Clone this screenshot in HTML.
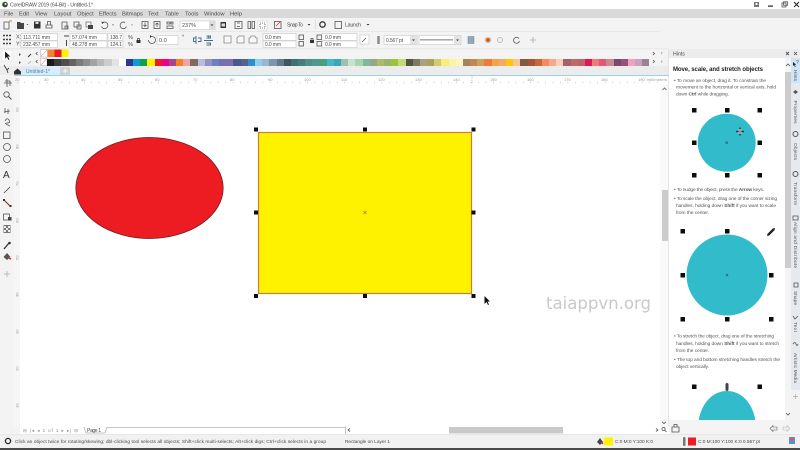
<!DOCTYPE html>
<html lang="en"><head><meta charset="utf-8"><title>CorelDRAW 2019</title>
<style>
html,body{margin:0;padding:0;width:800px;height:450px;overflow:hidden;background:#fff}
svg{position:absolute;left:0;top:0;font-family:"Liberation Sans",sans-serif;font-size:5.6px}
.pal{position:absolute;display:flex;height:7px}
.pal i{display:block;flex:1 1 0;height:100%}
text{fill:#4a4a4a}
.ic{fill:none;stroke:#555;stroke-width:.8}
.d{fill:#333}
.f{fill:#fff;stroke:#bbb;stroke-width:.5}
.r{fill:#999;font-size:4px}
.h{fill:#555;font-size:4.8px}
</style></head><body>
<svg width="800" height="450" viewBox="0 0 800 450" xmlns="http://www.w3.org/2000/svg">
<defs><filter id="b" x="-5%" y="-5%" width="110%" height="110%"><feGaussianBlur stdDeviation=".3"/></filter></defs>
<rect width="800" height="450" fill="#f3f3f3"/>
<!-- title -->
<rect width="800" height="9" fill="#fff"/>
<rect y="9" width="800" height="9" fill="#d9d9d9"/>
<rect y="31" width="660" height=".6" fill="#e2e2e2"/>
<rect y="48.5" width="668" height=".6" fill="#e2e2e2"/>
<rect y="66" width="668" height="9" fill="#ececec"/>
<!-- canvas -->
<rect x="20" y="84" width="640" height="343" fill="#fff"/>
<rect x="14" y="76" width="655" height="8" fill="#fff"/>
<rect x="14" y="76" width="6" height="351" fill="#f6f6f6"/>
<rect x="14" y="75" width="655" height=".9" fill="#8fd0e4"/>
<rect x="660" y="84" width="9" height="343" fill="#fafafa"/>
<rect x="662" y="190" width="6" height="51" fill="#ccc"/>
<!-- docker -->
<rect x="668.500" y="49" width="131.500" height="9" fill="#ececec"/>
<rect x="669" y="58" width="116" height="362" fill="#fff"/>
<rect x="785" y="58" width="6" height="362" fill="#f4f4f4"/>
<rect x="785" y="72" width="6" height="196" fill="#ccc"/>
<rect x="791" y="58" width="9" height="332" fill="#e6e9ee"/>
<rect x="791" y="58" width="9" height="25" fill="#cfe4f8"/>
<rect x="669" y="420" width="122" height="14" fill="#f4f4f4"/>
<rect x="791" y="390" width="9" height="44" fill="#f3f3f3"/>
<rect x="668" y="49" width=".7" height="385" fill="#ddd"/>
<!-- status -->
<rect x="20" y="427" width="649" height="7" fill="#fff"/>
<rect x="106" y="427" width="240" height=".7" fill="#aaa"/>
<rect x="345" y="427" width=".7" height="7" fill="#aaa"/>
<rect x="449" y="427" width="114" height="6.500" fill="#c9c9c9"/>
<rect y="434" width="800" height="14" fill="#f1f1f1"/>
<rect y="434" width="800" height=".5" fill="#ddd"/>
<rect y="448" width="800" height="2" fill="#4a4a4a"/>

<g filter="url(#b)">
<!-- title bar -->
<circle cx="5" cy="4.500" r="2.800" fill="#2c4a2c"/><circle cx="5.500" cy="4" r="1.100" fill="#dfe8c0"/>
<text x="10" y="6.500" textLength="83" font-size="5.200">CorelDRAW 2019 (64-Bit) - Untitled-1*</text>
<rect x="754" y="2" width="5" height="5" fill="#777"/><rect x="755.500" y="3" width="2" height="2" fill="#fff"/>
<rect x="768" y="5.500" width="5" height="1.200" fill="#222"/>
<rect class="ic" x="782" y="3" width="4" height="4"/><rect class="ic" x="783.500" y="1.800" width="4" height="3.500"/>
<path d="M794 2l5 5M799 2l-5 5" stroke="#222" stroke-width="1" fill="none"/>
<!-- menu -->
<g font-size="5.800">
<text x="4" y="15.500">File</text><text x="19" y="15.500">Edit</text><text x="35" y="15.500">View</text><text x="54" y="15.500">Layout</text><text x="77" y="15.500">Object</text><text x="99" y="15.500">Effects</text><text x="122" y="15.500">Bitmaps</text><text x="148" y="15.500">Text</text><text x="165" y="15.500">Table</text><text x="185" y="15.500">Tools</text><text x="204" y="15.500">Window</text><text x="230" y="15.500">Help</text>
</g>
<!-- toolbar row 1 -->
<path class="ic" d="M4 22v7h5v-7z"/><path d="M9 21h3" stroke="#d97a20"/>
<path d="M17 22h3l1 1h3v6h-7z" fill="#444"/><path d="M26.500 24l1 1 1-1z" class="d"/>
<path d="M34 21.500h6.500v7h-6.500z" fill="#333"/><rect x="35.500" y="22" width="3" height="2" fill="#ddd"/>
<path class="ic" d="M46 25v3h6v-3zM47.500 25v-3.500h3v3.500"/>
<path class="ic" stroke="#888" d="M62 22h5v7h-5zM65 26h3v3h-3z"/>
<path class="ic" d="M74 22h5v5h-5zM77 25h4v4h-4z"/>
<rect x="86" y="22" width="5" height="5" fill="none" stroke="#666" stroke-width=".7"/><rect x="88" y="25" width="5" height="4" fill="#444"/>
<path class="ic" d="M103 22.500a3.300 3.300 0 1 1-1.500 4"/><path d="M101.500 21.500l2.500 1-2 1.500z" class="d"/><path d="M112 24.500l1 1 1-1z" class="d"/>
<path class="ic" stroke="#aaa" d="M125 22.500a3.300 3.300 0 1 0 1.500 4"/><path d="M131 24.500l1 1 1-1z" fill="#666"/>
<rect class="ic" x="142" y="21.500" width="6" height="7"/><path d="M145 22.500v4M143.500 25l1.500 1.500 1.500-1.500" stroke="#444" stroke-width=".7" fill="none"/>
<rect class="ic" x="154" y="21.500" width="6" height="7"/><path d="M157 27v-4M155.500 24.500l1.500-1.500 1.500 1.500" stroke="#444" stroke-width=".7" fill="none"/>
<path class="ic" d="M167 22h3v2h-3zM171 22h2v2h-2zM167 26h6v2.500h-6z"/>
<rect class="f" x="180" y="21" width="35" height="8.500"/>
<text x="182" y="27" font-size="5.500">237%</text>
<rect x="209" y="21.500" width="6" height="7.500" fill="#ddd"/><path d="M210.500 24.500l1.500 1.500 1.500-1.500z" class="d"/>
<rect x="220.500" y="22" width="5.500" height="6" fill="#333"/><rect x="221.500" y="23.500" width="3.500" height="3" fill="#ddd"/>
<path class="ic" d="M235 21.500h7v7h-7zM237 23h3M237 26.500h3"/>
<path class="ic" d="M248 21.500h2.500v7h-2.500zM252 21.500h2.500v7h-2.500z"/>
<rect x="258" y="21" width="9" height="9" fill="#fff" stroke="#ccc" stroke-width=".5"/><path class="ic" d="M260 23h5v5h-5z" stroke-dasharray="1 1"/>
<rect class="ic" x="274.500" y="21.500" width="6.500" height="7"/><path d="M276 26l4-4" stroke="#d33" stroke-width=".8"/>
<text x="287" y="26.500" textLength="16" font-size="5.200">Snap To</text><path d="M307.500 24l1.500 1.500 1.500-1.500z" class="d"/>
<rect x="315" y="20" width=".6" height="9" fill="#ccc"/>
<circle cx="322.500" cy="24.500" r="2.700" fill="none" stroke="#333" stroke-width="1.300"/>
<rect class="ic" x="335" y="21.500" width="6.500" height="7"/>
<text x="345" y="26.500" textLength="16" font-size="5.200">Launch</text><path d="M366.500 24l1.500 1.500 1.500-1.500z" class="d"/>
<!-- property row -->
<path d="M3 35.500h2M6 35.500h2M9 35.500h2M3 39.500h2M6 39.500h2M9 39.500h2M3 43.500h2M6 43.500h2M9 43.500h2" stroke="#444" stroke-width="1.500"/>
<text x="16" y="38.500" font-size="5.500">X:</text><text x="16" y="45.500" font-size="5.500">Y:</text>
<rect class="f" x="21" y="33.500" width="36.500" height="7"/><rect class="f" x="21" y="41" width="36.500" height="6.500"/>
<text x="23" y="39" textLength="27" font-size="5">113.711 mm</text><text x="23" y="46" textLength="27" font-size="5">232.457 mm</text>
<path d="M64 36h5M66.500 40v6" stroke="#444" stroke-width="1"/>
<rect class="f" x="70" y="33.500" width="37" height="7"/><rect class="f" x="70" y="41" width="37" height="6.500"/>
<text x="72" y="39" textLength="25" font-size="5">57.074 mm</text><text x="72" y="46" textLength="25" font-size="5">48.278 mm</text>
<rect class="f" x="108" y="33.500" width="15" height="7"/><rect class="f" x="108" y="41" width="15" height="6.500"/>
<text x="110" y="39" textLength="12" font-size="5">138.7</text><text x="110" y="46" textLength="12" font-size="5">124.1</text>
<text x="128" y="39">%</text><text x="128" y="46">%</text>
<rect x="136.500" y="40" width="4" height="3" fill="#333"/><path class="ic" d="M137.500 40v-1.500h2V40"/>
<path class="ic" d="M148.500 40a3.500 3.500 0 1 0 3.500-3.500"/><path d="M150 35l2 1.500-2 1.500z" class="d"/>
<rect class="f" x="157" y="35.500" width="21" height="9"/><text x="159" y="42">0.0</text>
<text x="182" y="39" font-size="6">°</text>
<path d="M196 36v8M196 38h-2.500v3.500h2.500M198 38h3v3.500h-3" stroke="#3a6d8a" stroke-width=".9" fill="none"/>
<path d="M204 40.500h9M208.500 36v2.500M206.500 36h4v2h-4M206.500 43h4v2h-4" stroke="#3a6d8a" stroke-width=".9" fill="none"/>
<path d="M224 36h7v7h-7z" fill="#f8f8f8" stroke="#888" stroke-width=".8"/>
<path d="M237 43v-5l2-2h5v7z" fill="#f8f8f8" stroke="#888" stroke-width=".8"/>
<path d="M249 43v-5q2 0 2-2h4q0 2 2 2v5z" fill="#f8f8f8" stroke="#888" stroke-width=".8"/>
<rect class="f" x="263" y="33.500" width="33" height="7"/><rect class="f" x="263" y="41" width="33" height="6.500"/>
<text x="265" y="39" textLength="16" font-size="5">0.0 mm</text><text x="265" y="46" textLength="16" font-size="5">0.0 mm</text>
<rect class="ic" stroke="#888" x="299" y="35" width="4.500" height="4.500"/><rect class="ic" stroke="#888" x="299" y="41.500" width="4.500" height="4.500"/>
<rect x="310" y="40" width="4" height="3" fill="#333"/><path class="ic" d="M311 40v-1.500h2V40"/>
<rect class="ic" stroke="#888" x="317" y="35" width="4.500" height="4.500"/><rect class="ic" stroke="#888" x="317" y="41.500" width="4.500" height="4.500"/>
<rect class="f" x="322" y="33.500" width="35" height="7"/><rect class="f" x="322" y="41" width="35" height="6.500"/>
<text x="325" y="39" textLength="16" font-size="5">0.0 mm</text><text x="325" y="46" textLength="16" font-size="5">0.0 mm</text>
<rect class="f" x="360" y="35" width="9" height="9"/><path class="ic" d="M362 42l4-4"/>
<path d="M378.500 36v8" stroke="#888" stroke-width="2.500"/>
<rect class="f" x="384" y="35.500" width="33" height="9"/><text x="386" y="42" textLength="17" font-size="5">0.567 pt</text>
<rect x="410" y="36" width="7" height="8" fill="#e2e2e2"/><path d="M412 39.500l1.500 1.500 1.500-1.500z" class="d"/>
<rect class="f" x="419" y="35.500" width="42" height="9"/><rect x="420" y="39.500" width="33" height=".8" fill="#555"/>
<rect x="454" y="36" width="7" height="8" fill="#e2e2e2"/><path d="M456 39.500l1.500 1.500 1.500-1.500z" class="d"/>
<rect x="468" y="36.500" width="6" height="7" fill="#8fa9bd" stroke="#6b8597" stroke-width=".5"/>
<circle cx="488" cy="40" r="2.800" fill="#d8894d"/><circle cx="488" cy="40" r="1.100" fill="#b04a3a"/>
<circle cx="500" cy="40" r="2.500" fill="none" stroke="#bbb" stroke-width="1"/>
<path class="ic" stroke="#444" d="M519 38.500a3 3 0 1 0 .5 2.500"/>
<path d="M530 40h6M533 37v6" stroke="#aaa" stroke-width=".8"/>
<!-- doc palette -->
<path d="M19 53l2 1.500-2 1.500z M19 61l2 1.500-2 1.500z" fill="#555"/>
<path d="M28 57l3-3" stroke="#333" stroke-width="1"/>
<path d="M28 64l3-3" stroke="#bbb" stroke-width="1"/>
<path class="ic" stroke="#bbb" d="M37.500 52l-1.500 1.500 1.500 1.500M37.500 60l-1.500 1.500 1.500 1.500"/>
<rect x="40.500" y="49.500" width="7" height="7.500" fill="#fff" stroke="#aaa" stroke-width=".5"/><path d="M41 56.500l6-6.500" stroke="#d55" stroke-width=".5"/>
<rect x="47.500" y="49.500" width="7" height="7.500" fill="#f58231"/><rect x="54.500" y="49.500" width="7" height="7.500" fill="#ed1c24"/><rect x="61.500" y="49.500" width="7" height="7.500" fill="#fff200"/>
<rect x="40.500" y="58.500" width="6.500" height="7" fill="#fff" stroke="#aaa" stroke-width=".5"/><path d="M41 65l6-6.500" stroke="#d55" stroke-width=".5"/>
<path class="ic" stroke="#bbb" d="M653 52l1.500 1.500-1.500 1.500M653 60l1.500 1.500-1.500 1.500"/>
<path d="M661 51.500l2 1.500-2 1.500zM661 60l2 1.500-2 1.500z" fill="#bbb"/>
<!-- tab -->
<rect x="20.500" y="66.500" width="49" height="8.500" fill="#d8ebfa"/>
<text x="26" y="73" textLength="24" font-size="5" style="fill:#5a7a94">Untitled-1*</text>
<rect x="60" y="67" width="10" height="8" fill="#d0d0d0"/><path d="M62.500 71h5M65 68.500v5" stroke="#f5f5f5" stroke-width="1"/>
<path d="M14 71.500l3.500-3 3.500 3v3h-7z" fill="#333"/>
<!-- hruler -->
<text class="r" x="15" y="81">20</text><text class="r" x="44" y="81">30</text><text class="r" x="81" y="81">40</text><text class="r" x="118" y="81">50</text><text class="r" x="155" y="81">60</text><text class="r" x="193" y="81">70</text><text class="r" x="230" y="81">80</text><text class="r" x="268" y="81">90</text><text class="r" x="304" y="81">100</text><text class="r" x="341" y="81">110</text><text class="r" x="378" y="81">120</text><text class="r" x="415" y="81">130</text><text class="r" x="453" y="81">140</text><text class="r" x="490" y="81">150</text><text class="r" x="527" y="81">160</text><text class="r" x="564" y="81">170</text><text class="r" x="601" y="81">180</text><text class="r" x="638" y="81">190</text><text class="r" x="647" y="81" textLength="20">millimeters</text>
<path d="M17 82.500H660" stroke="#bbb" stroke-width="1.500" stroke-dasharray=".6 6.840"/>
<path d="M472 76v8" stroke="#777" stroke-width=".5" stroke-dasharray="1 1"/>
<path d="M662.500 90l2-2 2 2" class="ic"/>
<text class="r" transform="translate(18.500 112) rotate(-90)">90</text><text class="r" transform="translate(18.500 149) rotate(-90)">80</text><text class="r" transform="translate(18.500 186) rotate(-90)">70</text><text class="r" transform="translate(18.500 223) rotate(-90)">60</text><text class="r" transform="translate(18.500 260) rotate(-90)">50</text><text class="r" transform="translate(18.500 297) rotate(-90)">40</text><text class="r" transform="translate(18.500 334) rotate(-90)">30</text><text class="r" transform="translate(18.500 371) rotate(-90)">20</text><text class="r" transform="translate(18.500 408) rotate(-90)">10</text>
<!-- toolbox -->
<rect x="2" y="50" width="10" height="11" fill="#fff" stroke="#ddd" stroke-width=".5"/>
<path d="M5 51.500v7l2-1.500 1.500 3 1-.5-1.500-3h2.500z" fill="#222"/>
<path d="M4 65l3 5 1 3M9 68l-2 2" stroke="#444" stroke-width=".9" fill="none"/>
<path d="M4 83h8M7 79v8M5 81h5v5" class="ic" stroke="#3a5a6a"/>
<circle cx="6.500" cy="94.500" r="2.700" class="ic"/><path d="M8.500 96.500l3 3" stroke="#555" stroke-width="1.100"/>
<path d="M5 113V108M4 112l6-1M8 109v5" class="ic" stroke="#3a5a6a"/>
<path d="M5 121q2-4 4-1t-2 3 3 3" class="ic" stroke="#345"/>
<rect class="ic" x="3.500" y="132" width="6.500" height="6.500"/>
<circle class="ic" cx="7" cy="147" r="3.500"/><circle class="ic" cx="7" cy="159" r="3.500"/>
<text x="3" y="178" style="fill:#333;font-size:10px">A</text>
<path d="M4 193l6-6" stroke="#444" stroke-width=".8"/>
<path d="M4 200l6 6" stroke="#7a2a1a" stroke-width="1"/><rect x="3" y="199" width="2" height="2" fill="#333"/><rect x="9.500" y="205" width="2" height="2" fill="#333"/>
<rect class="ic" x="3.500" y="214" width="6" height="6"/><rect x="8" y="217" width="3.500" height="3.500" fill="#444"/>
<path d="M3.500 225h7v8h-7z" fill="#777"/><path d="M4 226h2v2h-2zM8 226h2v2h-2zM6 228h2v2H6zM4 230h2v2H4zM8 230h2v2H8z" fill="#eee"/>
<path d="M4 249l5-6" stroke="#333" stroke-width="1.300"/><circle cx="9.500" cy="243" r="1.300" fill="#333"/>
<path d="M3.500 257l3.500-4 3.500 4-3.500 3z" fill="#555"/><path d="M8 258l2.500 2 1-2z" fill="#d33"/>
<path d="M4 274h6M7 271v6" stroke="#aaa" stroke-width=".7"/>
<!-- shapes -->
<ellipse cx="149.500" cy="188" rx="73.700" ry="50.500" fill="#ed1c24" stroke="#5a1a1a" stroke-width=".7"/>
<rect x="258.500" y="132.500" width="213" height="161" fill="#fff200" stroke="#c8803a" stroke-width="1.200"/>
<path d="M363.500 211l3 3M366.500 211l-3 3" stroke="#c9552a" stroke-width=".6"/>
<g fill="#111">
<rect x="254" y="127.500" width="4" height="4"/><rect x="363" y="127.500" width="4" height="4"/><rect x="471.500" y="127.500" width="4" height="4"/>
<rect x="254" y="210.500" width="4" height="4"/><rect x="471.500" y="210.500" width="4" height="4"/>
<rect x="254" y="294" width="4" height="4"/><rect x="363" y="294" width="4" height="4"/><rect x="471.500" y="294" width="4" height="4"/>
</g>
<path d="M484.500 296v8l2-2 1.500 3 1-.5-1.500-3h2.500z" fill="#111"/>
<text x="546" y="309" textLength="105" lengthAdjust="spacingAndGlyphs" style="fill:#c9c9c9;font-size:17px;font-family:'DejaVu Sans',sans-serif">taiappvn.org</text>
<!-- hints -->
<text x="673" y="55.500" font-size="5.200">Hints</text>
<path d="M786 52l2 1.500-2 1.500M789 52l-2 1.500 2 1.500" class="ic" stroke="#bbb"/>
<path d="M794 52l3 3M797 52l-3 3" class="ic" stroke="#aaa"/>
<text x="673" y="71" textLength="90" font-weight="bold" style="font-size:6px;fill:#222">Move, scale, and stretch objects</text>
<text class="h" x="674" y="82" textLength="92">• To move an object, drag it. To constrain the</text>
<text class="h" x="676" y="88.700" textLength="100">movement to the horizontal or vertical axis, hold</text>
<text class="h" x="676" y="95.700" textLength="53">down <tspan font-weight="bold">Ctrl</tspan> while dragging.</text>
<text class="h" x="674" y="191" textLength="90">• To nudge the object, press the <tspan font-weight="bold">Arrow</tspan> keys.</text>
<text class="h" x="674" y="200" textLength="103">• To scale the object, drag one of the corner sizing</text>
<text class="h" x="676" y="207" textLength="100">handles, holding down <tspan font-weight="bold">Shift</tspan> if you want to scale</text>
<text class="h" x="676" y="214" textLength="33">from the center.</text>
<text class="h" x="674" y="337.500" textLength="100">• To stretch the object, drag one of the stretching</text>
<text class="h" x="676" y="345" textLength="103">handles, holding down <tspan font-weight="bold">Shift</tspan> if you want to stretch</text>
<text class="h" x="676" y="352" textLength="33">from the center.</text>
<text class="h" x="674" y="361" textLength="106">• The top and bottom stretching handles stretch the</text>
<text class="h" x="676" y="368" textLength="33">object vertically.</text>
<circle cx="726.700" cy="142.700" r="29" fill="#30bccb"/>
<path d="M725.500 141.500l2.400 2.400M727.900 141.500l-2.400 2.400" stroke="#1a5a66" stroke-width=".6"/>
<g fill="#111">
<rect x="692" y="108" width="4.500" height="4.500"/><rect x="725" y="108" width="4.500" height="4.500"/><rect x="757.500" y="108" width="4.500" height="4.500"/>
<rect x="692" y="140.500" width="4.500" height="4.500"/><rect x="757.500" y="140.500" width="4.500" height="4.500"/>
<rect x="692" y="173" width="4.500" height="4.500"/><rect x="725" y="173" width="4.500" height="4.500"/><rect x="757.500" y="173" width="4.500" height="4.500"/>
</g>
<path d="M736 131.500h8M740 127.500v8" stroke="#222" stroke-width="1.300"/><path d="M738.500 129h3v5h-3z" fill="#ddd" opacity=".6"/>
<circle cx="727" cy="275" r="40.500" fill="#30bccb"/>
<path d="M725.800 273.800l2.400 2.400M728.200 273.800l-2.400 2.400" stroke="#1a5a66" stroke-width=".6"/>
<g fill="#111">
<rect x="680.500" y="229" width="4.500" height="4.500"/><rect x="725" y="229" width="4.500" height="4.500"/>
<rect x="680.500" y="273" width="4.500" height="4.500"/><rect x="769" y="273" width="4.500" height="4.500"/>
<rect x="680.500" y="317" width="4.500" height="4.500"/><rect x="725" y="317" width="4.500" height="4.500"/><rect x="769" y="317" width="4.500" height="4.500"/>
</g>
<path d="M768 235l6-6" stroke="#222" stroke-width="2.300"/><path d="M767 236l2-.5-1.500-1.500zM775 228l-2 .5 1.500 1.500z" fill="#222"/>
<path d="M698.700 420c3-17 14-29 28.300-29s25.500 12 28.300 29z" fill="#30bccb"/>
<g fill="#111"><rect x="692" y="384.500" width="4.500" height="4.500"/><rect x="757.500" y="384.500" width="4.500" height="4.500"/></g>
<rect x="725.500" y="383" width="3" height="8" rx="1.500" fill="#444"/>
<path d="M786 66l2-2 2 2M786 413l2 2 2-2" class="ic" stroke="#333"/>
<!-- right tabs -->
<text class="h" transform="translate(793.800 70) rotate(90)" textLength="11">Hints</text>
<path d="M793 62v4l1-1 1 2 .7-.3-1-2h1.500z" fill="#222"/><text x="796" y="64" font-size="5">?</text>
<text class="h" transform="translate(793.800 100.500) rotate(90)" textLength="23">Properties</text>
<text class="h" transform="translate(793.800 143) rotate(90)" textLength="17">Objects</text>
<text class="h" transform="translate(793.800 182) rotate(90)" textLength="23">Transform</text>
<text class="h" transform="translate(793.800 222) rotate(90)" textLength="46">Align and Distribute</text>
<text class="h" transform="translate(793.800 291) rotate(90)" textLength="14">Shape</text>
<text class="h" transform="translate(793.800 322) rotate(90)" textLength="10">Text</text>
<text class="h" transform="translate(793.800 353) rotate(90)" textLength="30">Artistic Media</text>
<path d="M793 92l2.500-2 2.500 2-2.500 2z" fill="#555"/><circle cx="795.500" cy="134" r="2.500" fill="none" stroke="#555"/><circle cx="795.500" cy="174" r="2.500" fill="none" stroke="#555"/>
<path class="ic" d="M793 216h5v4h-5zM794 283h4v4h-4zM793 316l2 3 3-3M793 344q2-3 3 0t2 0"/>
<path d="M793 396.500h5M795.500 394v5" stroke="#aaa" stroke-width=".7"/>
<!-- docker foot -->
<path class="ic" d="M672 432h7v-5h-7zM674 427v-2.500h3v2.500"/>
<path d="M770 428.500l3-3v1.500h4v3h-4v1.500z" fill="#eee" stroke="#666" stroke-width=".6"/>
<path d="M790 428.500l-3-3v1.500h-4v3h4v1.500z" fill="#eee" stroke="#bbb" stroke-width=".6"/>
<!-- page bar -->
<text x="23" y="432" textLength="55" style="fill:#888;font-size:4.500px">⊟ |◂ ◂ 1 of 1 ▸ ▸| ⊟</text>
<path d="M84 427l2 6h19l2-6" fill="#fff" stroke="#888" stroke-width=".5"/><text x="87" y="432.200" textLength="14" font-size="5">Page 1</text>
<path d="M350 428.500l-2 1.500 2 1.500" class="ic"/><path d="M656 428.500l2 1.500-2 1.500" class="ic"/>
<path d="M662 422l2 1.500 2-1.500" class="ic"/><circle cx="663.500" cy="429" r="1.600" class="ic"/><path d="M665 430.500l1.500 1.500" class="ic"/>
<!-- status -->
<circle cx="8" cy="441" r="2.600" fill="none" stroke="#222" stroke-width="1.300"/>
<text x="15" y="443" textLength="311" font-size="4.800">Click an object twice for rotating/skewing; dbl-clicking tool selects all objects; Shift+click multi-selects; Alt+click digs; Ctrl+click selects in a group</text>
<text x="345" y="443" textLength="45" font-size="4.800">Rectangle on Layer 1</text>
<path d="M597 442l3-4 3 4-3 3z" fill="#444"/><path d="M600 443l3 1.500.5-2z" fill="#d33"/>
<rect x="604" y="437.500" width="9" height="8" fill="#fff200"/>
<text x="615" y="443" textLength="38" font-size="4.800">C:0 M:0 Y:100 K:0</text>
<rect x="683" y="437" width="2.500" height="9" rx="1" fill="#777"/>
<rect x="688" y="437.500" width="8" height="8" fill="#ed1c24"/>
<text x="698" y="443" textLength="62" font-size="4.800">C:0 M:100 Y:100 K:0 0.567 pt</text>
<rect x="789" y="437" width="6" height="7" fill="#5f8fbf"/><rect x="790" y="438" width="4" height="2" fill="#d55"/>
</g>
</svg>
<div class="pal" style="left:47px;top:58.500px;width:603px;filter:blur(.2px)">
<i style="background:#1a1a1a"></i><i style="background:#3a3a3a"></i><i style="background:#4d4d4d"></i><i style="background:#636363"></i><i style="background:#7b7b7b"></i><i style="background:#8e8e8e"></i><i style="background:#a3a3a3"></i><i style="background:#b8b8b8"></i><i style="background:#cdcdcd"></i><i style="background:#e3e3e3"></i><i style="background:#fff"></i><i style="background:#2b3990"></i><i style="background:#0f9ad6"></i><i style="background:#0ea14b"></i><i style="background:#fff200"></i><i style="background:#ed1c24"></i><i style="background:#ec008c"></i><i style="background:#a3478f"></i><i style="background:#f58220"></i><i style="background:#f3a3a3"></i><i style="background:#7f6a63"></i><i style="background:#b9bcdd"></i><i style="background:#9490c4"></i><i style="background:#6a80bf"></i><i style="background:#6f72b5"></i><i style="background:#7d6fa8"></i><i style="background:#47598f"></i><i style="background:#56618f"></i><i style="background:#2f8fc9"></i><i style="background:#8dcff0"></i>
<i style="background:#9ab5cf"></i><i style="background:#7d95ad"></i><i style="background:#5f7a8e"></i><i style="background:#3f5562"></i><i style="background:#3d7273"></i><i style="background:#457e7a"></i><i style="background:#4f8f8a"></i><i style="background:#4e9a90"></i><i style="background:#4a9d7e"></i><i style="background:#41b7c8"></i><i style="background:#3aa9b5"></i><i style="background:#a0bfb4"></i><i style="background:#c5e4cd"></i><i style="background:#a5d5b0"></i><i style="background:#7fb89a"></i><i style="background:#94a98a"></i><i style="background:#a9bc6c"></i><i style="background:#9ab46f"></i><i style="background:#9ac53f"></i><i style="background:#c5d87c"></i><i style="background:#55553f"></i><i style="background:#7e7b60"></i><i style="background:#a4a283"></i><i style="background:#a8a160"></i><i style="background:#d4cb70"></i><i style="background:#f7ed7c"></i><i style="background:#f8f4a0"></i><i style="background:#fbf7c5"></i><i style="background:#a08658"></i><i style="background:#c28650"></i><i style="background:#cda060"></i><i style="background:#ee7a3c"></i><i style="background:#f6a24c"></i><i style="background:#f0ab66"></i><i style="background:#fdc60b"></i><i style="background:#f3c78d"></i><i style="background:#7f5a3f"></i>
<i style="background:#a6553a"></i><i style="background:#c46a35"></i><i style="background:#f58a60"></i><i style="background:#f5a98a"></i><i style="background:#fcd0b8"></i><i style="background:#a06468"></i><i style="background:#c06a6a"></i><i style="background:#c0626a"></i><i style="background:#e31552"></i><i style="background:#ed7a78"></i><i style="background:#e6586f"></i><i style="background:#c98a90"></i><i style="background:#754a6a"></i><i style="background:#96517e"></i><i style="background:#f0a0c0"></i><i style="background:#c9a0c0"></i><i style="background:#958790"></i>
</div>
</body></html>
